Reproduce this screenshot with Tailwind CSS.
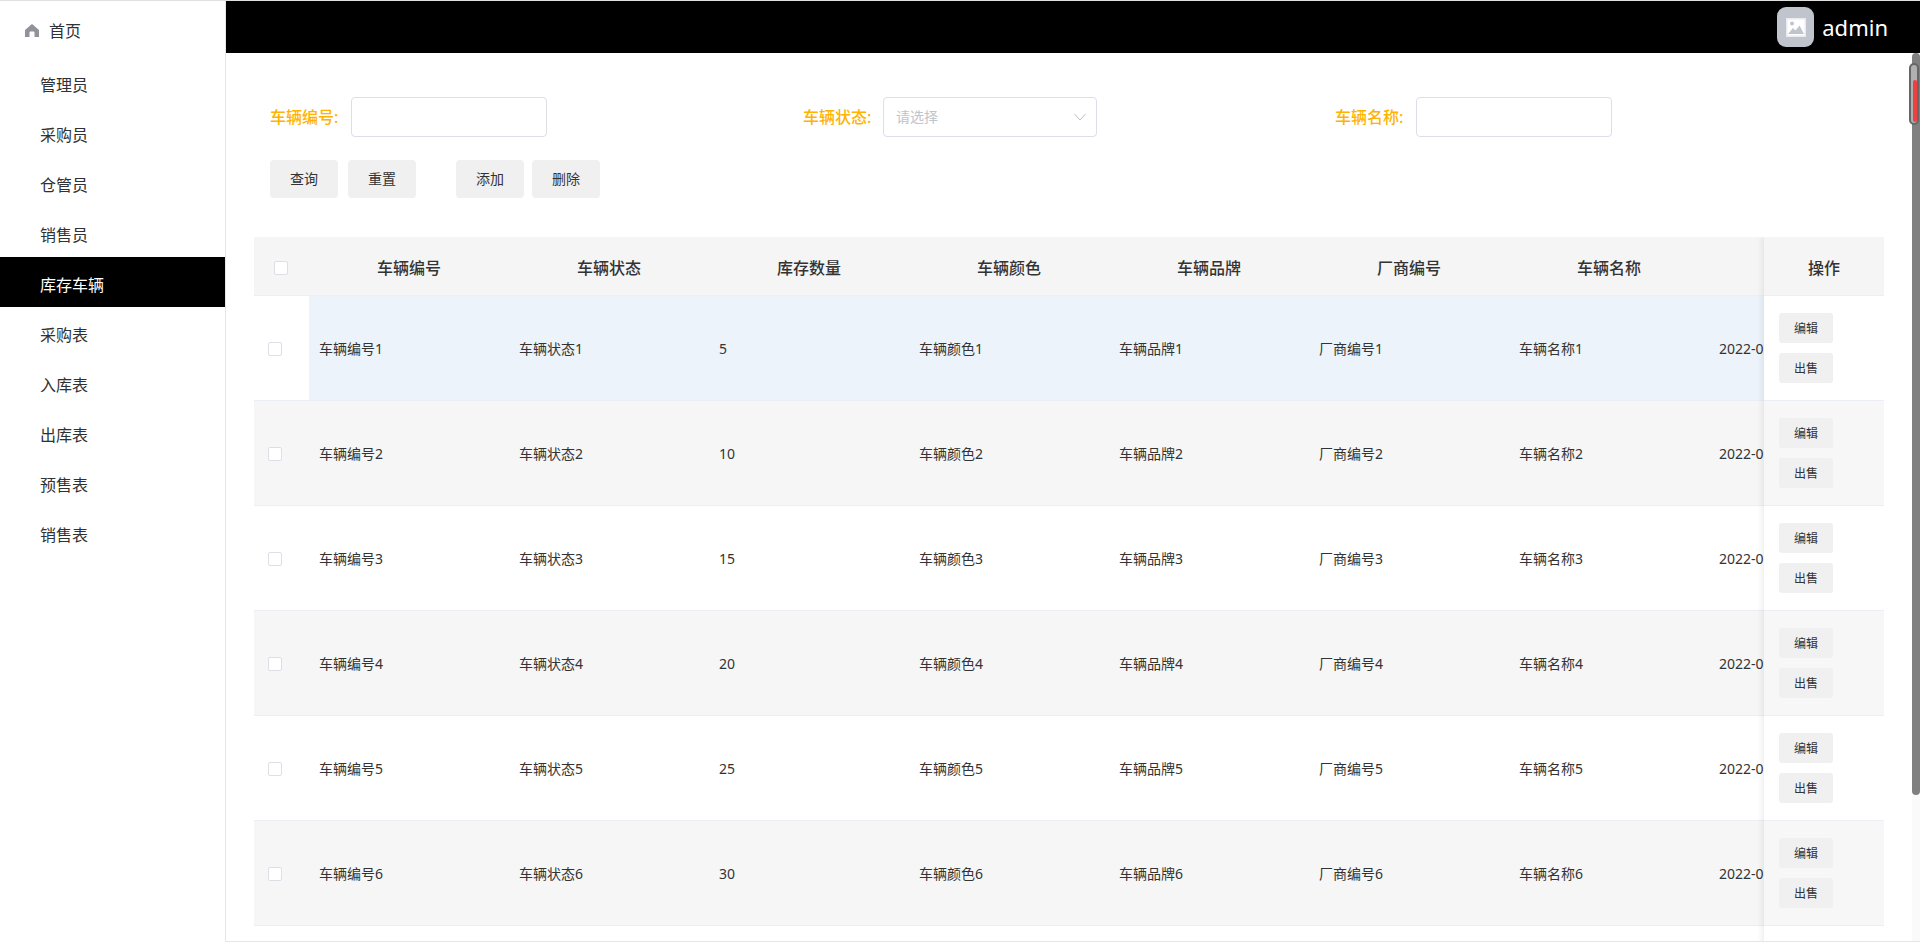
<!DOCTYPE html>
<html lang="zh">
<head>
<meta charset="utf-8">
<title>库存车辆</title>
<script src="https://cdn.jsdelivr.net/npm/@tailwindcss/browser@4"></script>
</head>
<body class="h-[942px] w-[1920px] overflow-hidden bg-white text-[#333] font-['Noto_Sans','Noto_Sans_CJK_SC',sans-serif]">
<div class="flex h-[942px] flex-col border-t border-[#e0e0e0]">
<div class="flex min-h-0 flex-1">
  <aside class="w-[226px] shrink-0 border-r border-[#e6e6e6] bg-white text-[16px] text-[#303133]">
    <div class="flex h-[56px] items-center gap-[10px] pl-[25px] pt-[3px]">
      <svg class="h-[13px] w-[14px]" viewBox="0 0 14 13"><path fill="#909399" d="M7 0 L14 6 V13 H9.5 V8.5 A1 1 0 0 0 8.5 7.5 H5.5 A1 1 0 0 0 4.5 8.5 V13 H0 V6 Z"/></svg>
      <span>首页</span>
    </div>
    <div class="flex h-[50px] items-center pl-[40px] pt-[5px]">管理员</div>
    <div class="flex h-[50px] items-center pl-[40px] pt-[5px]">采购员</div>
    <div class="flex h-[50px] items-center pl-[40px] pt-[5px]">仓管员</div>
    <div class="flex h-[50px] items-center pl-[40px] pt-[5px]">销售员</div>
    <div class="flex h-[50px] items-center bg-black pl-[40px] pt-[5px] text-white">库存车辆</div>
    <div class="flex h-[50px] items-center pl-[40px] pt-[5px]">采购表</div>
    <div class="flex h-[50px] items-center pl-[40px] pt-[5px]">入库表</div>
    <div class="flex h-[50px] items-center pl-[40px] pt-[5px]">出库表</div>
    <div class="flex h-[50px] items-center pl-[40px] pt-[5px]">预售表</div>
    <div class="flex h-[50px] items-center pl-[40px] pt-[5px]">销售表</div>
  </aside>

  <div class="flex min-w-0 flex-1 flex-col">
    <header class="flex h-[52px] shrink-0 items-center justify-end bg-black pr-[32px]">
      <div class="flex h-[40px] w-[37px] items-center justify-center rounded-[9px] bg-[#c0c4cc]">
        <svg class="h-[19px] w-[20px]" viewBox="0 0 20 19"><rect width="20" height="19" fill="#e9ebef"/><rect x="1.5" y="1.5" width="17" height="16" fill="#fff"/><circle cx="6" cy="5.5" r="2" fill="#c0c4cc"/><path fill="#c0c4cc" d="M2 16 L7 10 L9.5 12.5 L13.5 7.5 L18 16 Z"/></svg>
      </div>
      <span class="ml-[8px] text-[22px] leading-none text-white">admin</span>
    </header>

    <main class="relative min-h-0 flex-1 overflow-hidden border-b border-[#e6e6e6]">
      <div class="grid grid-cols-[533px_532px_533px] pl-[44px] pt-[44px]">
        <div class="flex items-center"><label class="mr-[13px] w-[68px] whitespace-nowrap text-[16px] font-medium text-[#ffb300]">车辆编号:</label><div class="h-[40px] w-[196px] rounded-[4px] border border-[#dcdfe6] bg-white"></div></div>
        <div class="flex items-center"><label class="mr-[12px] w-[68px] whitespace-nowrap text-[16px] font-medium text-[#ffb300]">车辆状态:</label><div class="flex h-[40px] w-[214px] items-center justify-between rounded-[4px] border border-[#dcdfe6] bg-white pl-[12px] pr-[10px]"><span class="mb-[1px] text-[14px] text-[#c0c4cc]">请选择</span><svg class="h-[8px] w-[12px]" viewBox="0 0 12 8"><path fill="none" stroke="#c0c4cc" stroke-width="1" d="M.5 1 L6 7 L11.5 1"/></svg></div></div>
        <div class="flex items-center"><label class="mr-[13px] w-[68px] whitespace-nowrap text-[16px] font-medium text-[#ffb300]">车辆名称:</label><div class="h-[40px] w-[196px] rounded-[4px] border border-[#dcdfe6] bg-white"></div></div>
      </div>

      <div class="flex pl-[44px] pt-[23px] text-[14px]">
        <button class="h-[38px] w-[68px] rounded-[4px] bg-[#f0f0f0] pb-[2px] text-[#333]">查询</button>
        <button class="ml-[10px] h-[38px] w-[68px] rounded-[4px] bg-[#f0f0f0] pb-[2px] text-[#333]">重置</button>
        <button class="ml-[40px] h-[38px] w-[68px] rounded-[4px] bg-[#f0f0f0] pb-[2px] text-[#333]">添加</button>
        <button class="ml-[8px] h-[38px] w-[68px] rounded-[4px] bg-[#f0f0f0] pb-[2px] text-[#333]">删除</button>
      </div>

      <div class="ml-[28px] mt-[39px] flex w-[1630px] overflow-hidden">
        <div class="w-[1510px] shrink-0 overflow-hidden">
          <div class="flex h-[59px] w-[1710px] items-center border-b border-[#ebeef5] bg-[#f5f5f5] text-[16px] font-medium">
            <div class="flex w-[55px] shrink-0 pl-[20px] pt-[4px]"><span class="h-[14px] w-[14px] rounded-[2px] border border-[#dcdfe6] bg-white"></span></div>
            <div class="w-[200px] shrink-0 pt-[4px] text-center">车辆编号</div>
            <div class="w-[200px] shrink-0 pt-[4px] text-center">车辆状态</div>
            <div class="w-[200px] shrink-0 pt-[4px] text-center">库存数量</div>
            <div class="w-[200px] shrink-0 pt-[4px] text-center">车辆颜色</div>
            <div class="w-[200px] shrink-0 pt-[4px] text-center">车辆品牌</div>
            <div class="w-[200px] shrink-0 pt-[4px] text-center">厂商编号</div>
            <div class="w-[200px] shrink-0 pt-[4px] text-center">车辆名称</div>
          </div>

          <div class="flex h-[105px] w-[1710px] items-stretch border-b border-[#ebeef5] text-[14px]">
            <div class="flex w-[55px] shrink-0 items-center bg-white pl-[14px] pt-[2px]"><span class="h-[14px] w-[14px] rounded-[2px] border border-[#dcdfe6] bg-white"></span></div>
            <div class="flex flex-1 items-center bg-[#ecf3fb] pt-[1px]">
              <div class="w-[200px] shrink-0 pl-[10px]">车辆编号1</div><div class="w-[200px] shrink-0 pl-[10px]">车辆状态1</div><div class="w-[200px] shrink-0 pl-[10px]">5</div><div class="w-[200px] shrink-0 pl-[10px]">车辆颜色1</div><div class="w-[200px] shrink-0 pl-[10px]">车辆品牌1</div><div class="w-[200px] shrink-0 pl-[10px]">厂商编号1</div><div class="w-[200px] shrink-0 pl-[10px]">车辆名称1</div><div class="w-[200px] shrink-0 pl-[10px]">2022-01-01</div>
            </div>
          </div>
          <div class="flex h-[105px] w-[1710px] items-center border-b border-[#ebeef5] bg-[#f6f6f6] text-[14px]">
            <div class="flex w-[55px] shrink-0 items-center pl-[14px] pt-[2px]"><span class="h-[14px] w-[14px] rounded-[2px] border border-[#dcdfe6] bg-white"></span></div>
            <div class="w-[200px] shrink-0 pl-[10px]">车辆编号2</div><div class="w-[200px] shrink-0 pl-[10px]">车辆状态2</div><div class="w-[200px] shrink-0 pl-[10px]">10</div><div class="w-[200px] shrink-0 pl-[10px]">车辆颜色2</div><div class="w-[200px] shrink-0 pl-[10px]">车辆品牌2</div><div class="w-[200px] shrink-0 pl-[10px]">厂商编号2</div><div class="w-[200px] shrink-0 pl-[10px]">车辆名称2</div><div class="w-[200px] shrink-0 pl-[10px]">2022-01-02</div>
          </div>
          <div class="flex h-[105px] w-[1710px] items-center border-b border-[#ebeef5] bg-white text-[14px]">
            <div class="flex w-[55px] shrink-0 items-center pl-[14px] pt-[2px]"><span class="h-[14px] w-[14px] rounded-[2px] border border-[#dcdfe6] bg-white"></span></div>
            <div class="w-[200px] shrink-0 pl-[10px]">车辆编号3</div><div class="w-[200px] shrink-0 pl-[10px]">车辆状态3</div><div class="w-[200px] shrink-0 pl-[10px]">15</div><div class="w-[200px] shrink-0 pl-[10px]">车辆颜色3</div><div class="w-[200px] shrink-0 pl-[10px]">车辆品牌3</div><div class="w-[200px] shrink-0 pl-[10px]">厂商编号3</div><div class="w-[200px] shrink-0 pl-[10px]">车辆名称3</div><div class="w-[200px] shrink-0 pl-[10px]">2022-01-03</div>
          </div>
          <div class="flex h-[105px] w-[1710px] items-center border-b border-[#ebeef5] bg-[#f6f6f6] text-[14px]">
            <div class="flex w-[55px] shrink-0 items-center pl-[14px] pt-[2px]"><span class="h-[14px] w-[14px] rounded-[2px] border border-[#dcdfe6] bg-white"></span></div>
            <div class="w-[200px] shrink-0 pl-[10px]">车辆编号4</div><div class="w-[200px] shrink-0 pl-[10px]">车辆状态4</div><div class="w-[200px] shrink-0 pl-[10px]">20</div><div class="w-[200px] shrink-0 pl-[10px]">车辆颜色4</div><div class="w-[200px] shrink-0 pl-[10px]">车辆品牌4</div><div class="w-[200px] shrink-0 pl-[10px]">厂商编号4</div><div class="w-[200px] shrink-0 pl-[10px]">车辆名称4</div><div class="w-[200px] shrink-0 pl-[10px]">2022-01-04</div>
          </div>
          <div class="flex h-[105px] w-[1710px] items-center border-b border-[#ebeef5] bg-white text-[14px]">
            <div class="flex w-[55px] shrink-0 items-center pl-[14px] pt-[2px]"><span class="h-[14px] w-[14px] rounded-[2px] border border-[#dcdfe6] bg-white"></span></div>
            <div class="w-[200px] shrink-0 pl-[10px]">车辆编号5</div><div class="w-[200px] shrink-0 pl-[10px]">车辆状态5</div><div class="w-[200px] shrink-0 pl-[10px]">25</div><div class="w-[200px] shrink-0 pl-[10px]">车辆颜色5</div><div class="w-[200px] shrink-0 pl-[10px]">车辆品牌5</div><div class="w-[200px] shrink-0 pl-[10px]">厂商编号5</div><div class="w-[200px] shrink-0 pl-[10px]">车辆名称5</div><div class="w-[200px] shrink-0 pl-[10px]">2022-01-05</div>
          </div>
          <div class="flex h-[105px] w-[1710px] items-center border-b border-[#ebeef5] bg-[#f6f6f6] text-[14px]">
            <div class="flex w-[55px] shrink-0 items-center pl-[14px] pt-[2px]"><span class="h-[14px] w-[14px] rounded-[2px] border border-[#dcdfe6] bg-white"></span></div>
            <div class="w-[200px] shrink-0 pl-[10px]">车辆编号6</div><div class="w-[200px] shrink-0 pl-[10px]">车辆状态6</div><div class="w-[200px] shrink-0 pl-[10px]">30</div><div class="w-[200px] shrink-0 pl-[10px]">车辆颜色6</div><div class="w-[200px] shrink-0 pl-[10px]">车辆品牌6</div><div class="w-[200px] shrink-0 pl-[10px]">厂商编号6</div><div class="w-[200px] shrink-0 pl-[10px]">车辆名称6</div><div class="w-[200px] shrink-0 pl-[10px]">2022-01-06</div>
          </div>
        </div>

        <div class="relative z-10 w-[120px] shrink-0 shadow-[-2px_0_6px_rgba(0,0,0,0.08)]">
          <div class="flex h-[59px] items-center justify-center border-b border-[#ebeef5] bg-[#f5f5f5] pt-[4px] text-[16px] font-medium">操作</div>
          <div class="flex h-[105px] flex-col gap-[10px] border-b border-[#ebeef5] bg-white pl-[15px] pt-[17px] text-[12px]"><button class="h-[30px] w-[54px] rounded-[3px] bg-[#f0f0f0] pt-[2px]">编辑</button><button class="h-[30px] w-[54px] rounded-[3px] bg-[#f0f0f0] pt-[2px]">出售</button></div>
          <div class="flex h-[105px] flex-col gap-[10px] border-b border-[#ebeef5] bg-[#f7f7f7] pl-[15px] pt-[17px] text-[12px]"><button class="h-[30px] w-[54px] rounded-[3px] bg-[#f0f0f0] pt-[2px]">编辑</button><button class="h-[30px] w-[54px] rounded-[3px] bg-[#f0f0f0] pt-[2px]">出售</button></div>
          <div class="flex h-[105px] flex-col gap-[10px] border-b border-[#ebeef5] bg-white pl-[15px] pt-[17px] text-[12px]"><button class="h-[30px] w-[54px] rounded-[3px] bg-[#f0f0f0] pt-[2px]">编辑</button><button class="h-[30px] w-[54px] rounded-[3px] bg-[#f0f0f0] pt-[2px]">出售</button></div>
          <div class="flex h-[105px] flex-col gap-[10px] border-b border-[#ebeef5] bg-[#f7f7f7] pl-[15px] pt-[17px] text-[12px]"><button class="h-[30px] w-[54px] rounded-[3px] bg-[#f0f0f0] pt-[2px]">编辑</button><button class="h-[30px] w-[54px] rounded-[3px] bg-[#f0f0f0] pt-[2px]">出售</button></div>
          <div class="flex h-[105px] flex-col gap-[10px] border-b border-[#ebeef5] bg-white pl-[15px] pt-[17px] text-[12px]"><button class="h-[30px] w-[54px] rounded-[3px] bg-[#f0f0f0] pt-[2px]">编辑</button><button class="h-[30px] w-[54px] rounded-[3px] bg-[#f0f0f0] pt-[2px]">出售</button></div>
          <div class="flex h-[105px] flex-col gap-[10px] border-b border-[#ebeef5] bg-[#f7f7f7] pl-[15px] pt-[17px] text-[12px]"><button class="h-[30px] w-[54px] rounded-[3px] bg-[#f0f0f0] pt-[2px]">编辑</button><button class="h-[30px] w-[54px] rounded-[3px] bg-[#f0f0f0] pt-[2px]">出售</button></div>
          <div class="h-[30px] bg-white"></div>
        </div>
      </div>

      <div class="absolute right-0 top-0 h-full w-[8px] bg-[#fafafa]">
        <div class="h-[742px] w-[8px] rounded-[4px] bg-[#808080]"></div>
      </div>
      <div class="absolute right-px top-[10px] h-[62px] w-[10px] rounded-[5px] border-2 border-[#666] bg-[#b0b0b0] pl-[2px] pt-[15px]">
        <div class="h-[42px] w-[4px] rounded-[2px] bg-[#ef4040]"></div>
      </div>
    </main>
  </div>
</div>
</div>
</body>
</html>
